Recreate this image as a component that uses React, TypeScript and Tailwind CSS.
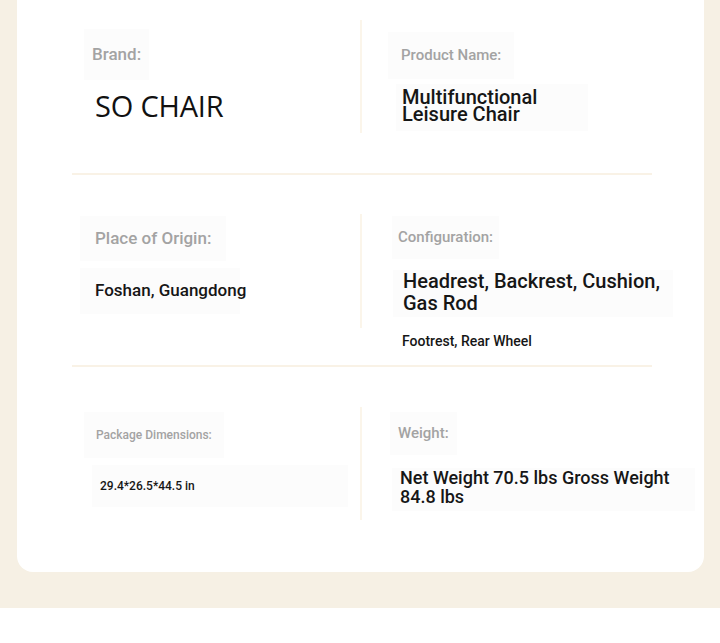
import React from 'react';

const label = "text-[#a3a3a3] font-medium";
const value = "text-[#161616] font-medium";

const VDivider: React.FC<{ top: string; h: string }> = ({ top, h }) => (
  <div className={`w-[2px] bg-[#fbf5ea] ${top} ${h}`} />
);

const HDivider = () => <div className="ml-[55px] mr-[52px] h-[2px] bg-[#f9f2e6]" />;

const App: React.FC = () => {
  return (
    <div className="w-[720px] bg-white font-['Roboto',sans-serif]">
      <div className="bg-[#f6f0e4] pl-[17px] pr-[16px] pb-[36px]">
        <div className="bg-white rounded-b-2xl overflow-hidden">
          {/* brand / product name */}
          <div className="ml-[55px] h-[173px] grid grid-cols-[288px_2px_290px] items-start">
            <div className="pt-[29px] flex flex-col">
              <div className="ml-[12px] px-[8px] h-[51px] w-fit flex items-center bg-[#fcfcfc]">
                <span className={`${label} text-[17px]`}>Brand:</span>
              </div>
              <div className="mt-[10px] ml-[23px] text-[29px] leading-[32px] tracking-[-0.2px] text-[#111] font-['Open_Sans',sans-serif]">
                SO CHAIR
              </div>
            </div>
            <VDivider top="mt-[20px]" h="h-[113px]" />
            <div className="pt-[32px] flex flex-col">
              <div className="ml-[26px] px-[13px] h-[47px] w-fit flex items-center bg-[#fcfcfc]">
                <span className={`${label} text-[15px]`}>Product Name:</span>
              </div>
              <div className="mt-[5px] ml-[34px] w-[192px] px-[6px] pt-[5px] pb-[8px] bg-[#fcfcfc]">
                <p className={`${value} text-[20px] leading-[17px]`}>Multifunctional Leisure Chair</p>
              </div>
            </div>
          </div>
          <HDivider />

          {/* origin / configuration */}
          <div className="ml-[55px] h-[190px] grid grid-cols-[288px_2px_290px] items-start">
            <div className="pt-[41px] flex flex-col">
              <div className="ml-[8px] px-[15px] h-[45px] w-fit flex items-center bg-[#fcfcfc]">
                <span className={`${label} text-[17px]`}>Place of Origin:</span>
              </div>
              <div className="mt-[7px] ml-[8px] px-[15px] h-[46px] w-[160px] flex items-center bg-[#fcfcfc]">
                <span className={`${value} text-[17px] whitespace-nowrap`}>Foshan, Guangdong</span>
              </div>
            </div>
            <VDivider top="mt-[39px]" h="h-[114px]" />
            <div className="pt-[41px] flex flex-col">
              <div className="ml-[30px] px-[6px] h-[43px] w-fit flex items-center bg-[#fcfcfc]">
                <span className={`${label} text-[15px]`}>Configuration:</span>
              </div>
              <div className="mt-[11px] ml-[31px] w-[280px] px-[10px] pb-[3px] bg-[#fcfcfc]">
                <p className={`${value} text-[20px] leading-[22px]`}>Headrest, Backrest, Cushion, Gas Rod</p>
              </div>
              <p className={`${value} mt-[14px] ml-[40px] text-[14px] leading-[20px]`}>Footrest, Rear Wheel</p>
            </div>
          </div>
          <HDivider />

          {/* dimensions / weight */}
          <div className="ml-[55px] h-[205px] grid grid-cols-[288px_2px_290px] items-start">
            <div className="pt-[45px] flex flex-col">
              <div className="ml-[12px] px-[12px] h-[46px] w-fit flex items-center bg-[#fcfcfc]">
                <span className={`${label} text-[12px]`}>Package Dimensions:</span>
              </div>
              <div className="mt-[7px] ml-[20px] px-[8px] h-[42px] w-[256px] flex items-center bg-[#fcfcfc]">
                <span className={`${value} text-[12px]`}>29.4*26.5*44.5 in</span>
              </div>
            </div>
            <VDivider top="mt-[40px]" h="h-[113px]" />
            <div className="pt-[45px] flex flex-col">
              <div className="ml-[28px] px-[8px] h-[43px] w-fit flex items-center bg-[#fcfcfc]">
                <span className={`${label} text-[15px]`}>Weight:</span>
              </div>
              <div className="mt-[13px] ml-[30px] w-[303px] px-[8px] pb-[5px] bg-[#fcfcfc]">
                <p className={`${value} text-[18px] leading-[19px]`}>Net Weight 70.5 lbs Gross Weight 84.8 lbs</p>
              </div>
            </div>
          </div>
        </div>
      </div>
    </div>
  );
};

export default App;
